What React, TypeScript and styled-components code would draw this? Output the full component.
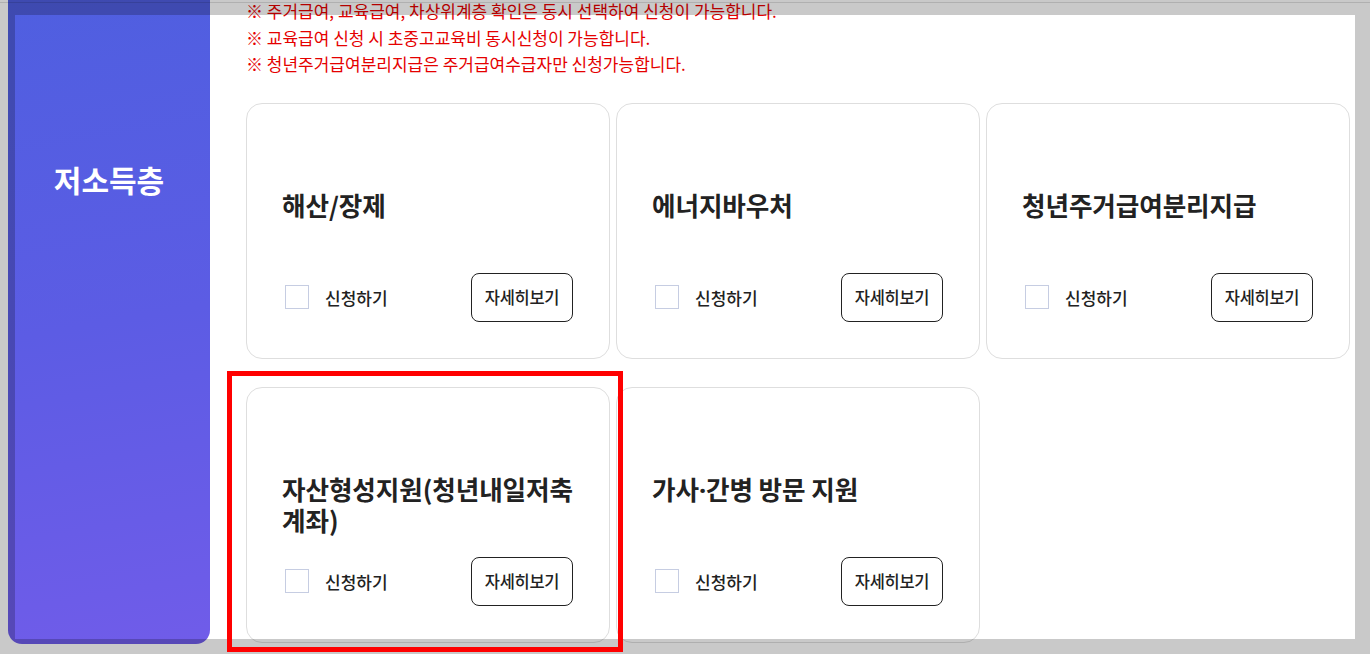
import React from "react";
import styled, { createGlobalStyle } from "styled-components";

const GlobalStyle = createGlobalStyle`
  html, body {
    margin: 0;
    padding: 0;
    background: #ffffff;
    overflow: hidden;
  }
  body {
    font-family: "Noto Sans CJK KR", "Noto Sans", sans-serif;
    color: #222;
  }
`;

const Page = styled.div`
  position: relative;
  width: 1370px;
  height: 654px;
  display: flex;
  align-items: flex-start;
`;

const Sidebar = styled.aside`
  width: 202px;
  height: 644px;
  margin-left: 8px;
  flex-shrink: 0;
  box-sizing: border-box;
  padding-top: 157px;
  border-radius: 0 0 14px 14px;
  background: linear-gradient(170deg, #4f5fe0 0%, #5c5ce4 50%, #705ce9 100%);
  color: #fff;
  font-size: 30px;
  font-weight: 700;
  text-align: center;
`;

const Main = styled.main`
  flex: 1;
  padding-left: 36px;
  margin-top: -2px;
`;

const Notes = styled.ul`
  list-style: none;
  margin: 0 0 25px;
  padding: 0;
`;

const Note = styled.li`
  color: #e50000;
  font-size: 17px;
  line-height: 26.5px;
`;

const Grid = styled.div`
  display: grid;
  grid-template-columns: repeat(3, 364px);
  column-gap: 6px;
  row-gap: 28px;
`;

const Card = styled.div`
  height: 256px;
  box-sizing: border-box;
  border: 1px solid #dedede;
  border-radius: 16px;
  display: flex;
  flex-direction: column;
  padding: 85px 0 36px;
`;

const Title = styled.h3`
  margin: 0;
  padding: 0 30px 0 35px;
  font-size: 25.6px;
  font-weight: 700;
  line-height: 31px;
  color: #222;
  letter-spacing: -0.1px;
`;

const Dot = styled.span`
  font-family: "Noto Sans", sans-serif;
`;

const Footer = styled.div`
  margin-top: auto;
  display: flex;
  align-items: center;
  justify-content: space-between;
  padding: 0 36px 0 38px;
`;

const Check = styled.label`
  display: flex;
  align-items: center;
  gap: 16px;
  font-size: 17px;
  font-weight: 500;
  color: #222;
`;

const Box = styled.span`
  width: 24px;
  height: 24px;
  box-sizing: border-box;
  border: 1px solid #c6cde2;
  background: #fff;
`;

const DetailButton = styled.button`
  width: 102px;
  height: 49px;
  box-sizing: border-box;
  border: 1px solid #222;
  border-radius: 8px;
  background: #fff;
  font-family: inherit;
  font-size: 16.5px;
  font-weight: 500;
  color: #222;
  letter-spacing: -0.3px;
  padding: 0;
`;

const Frame = styled.div`
  position: absolute;
  inset: 0;
  pointer-events: none;
  box-sizing: border-box;
  border-style: solid;
  border-color: rgba(0, 0, 0, 0.21);
  border-width: 15px;
`;

const FrameLine = styled.div`
  position: absolute;
  left: 0;
  right: 0;
  top: 2px;
  height: 1px;
  background: rgba(0, 0, 0, 0.12);
  pointer-events: none;
`;

const Highlight = styled.div`
  position: absolute;
  left: 227px;
  top: 371px;
  width: 396px;
  height: 281px;
  box-sizing: border-box;
  border: 5px solid #f00;
  pointer-events: none;
`;

const notes = [
  "※ 주거급여, 교육급여, 차상위계층 확인은 동시 선택하여 신청이 가능합니다.",
  "※ 교육급여 신청 시 초중고교육비 동시신청이 가능합니다.",
  "※ 청년주거급여분리지급은 주거급여수급자만 신청가능합니다.",
];

const services = [
  "해산/장제",
  "에너지바우처",
  "청년주거급여분리지급",
  "자산형성지원(청년내일저축계좌)",
  "가사·간병 방문 지원",
];

// the CJK font draws "·" full width; the reference shows a narrow dot
const renderTitle = (s: string) =>
  s.split("·").map((part, i) => (
    <React.Fragment key={i}>
      {i > 0 && <Dot>·</Dot>}
      {part}
    </React.Fragment>
  ));

const App: React.FC = () => {
  return (
    <>
      <GlobalStyle />
      <Page>
        <Sidebar>저소득층</Sidebar>
        <Main>
          <Notes>
            {notes.map((n) => (
              <Note key={n}>{n}</Note>
            ))}
          </Notes>
          <Grid>
            {services.map((s) => (
              <Card key={s}>
                <Title>{renderTitle(s)}</Title>
                <Footer>
                  <Check>
                    <Box />
                    신청하기
                  </Check>
                  <DetailButton>자세히보기</DetailButton>
                </Footer>
              </Card>
            ))}
          </Grid>
        </Main>
        <Frame />
        <FrameLine />
        <Highlight />
      </Page>
    </>
  );
};

export default App;
